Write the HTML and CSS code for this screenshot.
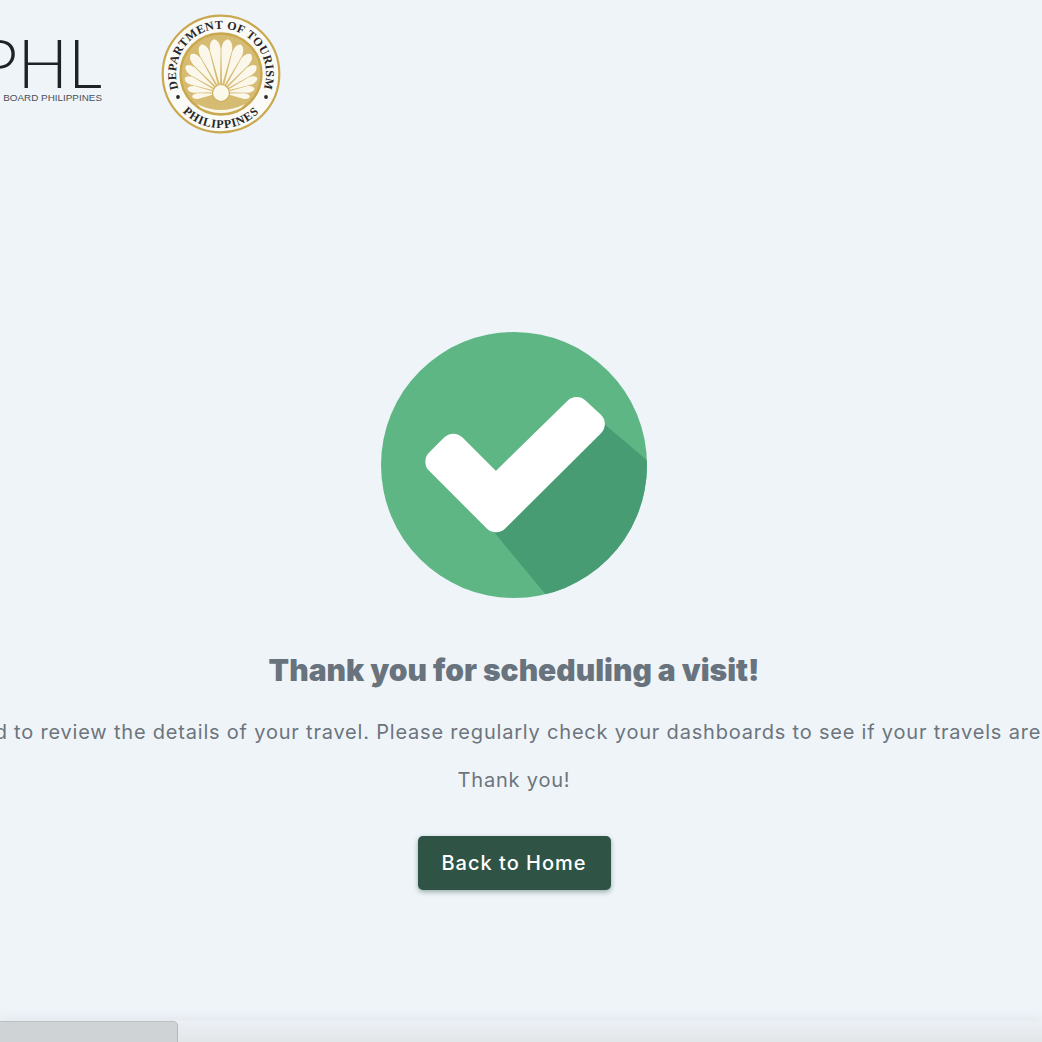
FILE: index.html
```html
<!DOCTYPE html>
<html lang="en">
<head>
<meta charset="utf-8">
<title>Thank you</title>
<link rel="stylesheet" href="styles.css">
</head>
<body>
<div class="page">
  <header class="logos">
    <div class="phl">
      <div class="phl-mark">PHL</div>
      <div class="phl-sub">BOARD PHILIPPINES</div>
    </div>
    <svg class="seal" viewBox="0 0 120 120" aria-label="Department of Tourism Philippines seal">
      <defs>
        <path id="arcTop" d="M 17 73 A 45 45 0 1 1 103 73"/>
        <path id="arcBottom" d="M 6.8 69.4 A 54 54 0 0 0 113.2 69.4"/>
        <path id="petal" d="M0 -8L-5.4 -44Q-5.4 -53 0 -54.5Q5.4 -53 5.4 -44Z"/>
      </defs>
      <circle cx="60" cy="60" r="58.3" fill="#fafaf6" stroke="#c9a84f" stroke-width="2.2"/>
      <circle cx="60" cy="60" r="40.5" fill="#d6bc72" stroke="#c9a84f" stroke-width="2.4"/>
      <g fill="#fbf7ea">
        <use href="#petal" transform="translate(60 79) rotate(7.5) scale(.995)"/>
        <use href="#petal" transform="translate(60 79) rotate(-7.5) scale(.995)"/>
        <use href="#petal" transform="translate(60 79) rotate(22.5) scale(.96)"/>
        <use href="#petal" transform="translate(60 79) rotate(-22.5) scale(.96)"/>
        <use href="#petal" transform="translate(60 79) rotate(37.5) scale(.9)"/>
        <use href="#petal" transform="translate(60 79) rotate(-37.5) scale(.9)"/>
        <use href="#petal" transform="translate(60 79) rotate(52.5) scale(.815)"/>
        <use href="#petal" transform="translate(60 79) rotate(-52.5) scale(.815)"/>
        <use href="#petal" transform="translate(60 79) rotate(67.5) scale(.72)"/>
        <use href="#petal" transform="translate(60 79) rotate(-67.5) scale(.72)"/>
        <use href="#petal" transform="translate(60 79) rotate(82.5) scale(.62)"/>
        <use href="#petal" transform="translate(60 79) rotate(-82.5) scale(.62)"/>
        <use href="#petal" transform="translate(60 79) rotate(97.5) scale(.535)"/>
        <use href="#petal" transform="translate(60 79) rotate(-97.5) scale(.535)"/>
      </g>
      <path d="M36 90Q60 102 84 90L80 94Q60 104 40 94Z" fill="#fbf7ea"/>
      <circle cx="60" cy="79" r="8.5" fill="#fbf8ec" stroke="#cdaf5c" stroke-width="1.2"/>
      <text class="seal-text"><textPath href="#arcTop" startOffset="50%" text-anchor="middle">DEPARTMENT OF TOURISM</textPath></text>
      <text class="seal-text seal-text-low"><textPath href="#arcBottom" startOffset="50%" text-anchor="middle">PHILIPPINES</textPath></text>
      <circle cx="17" cy="83" r="1.9" fill="#2b2b2b"/>
      <circle cx="105" cy="83" r="1.9" fill="#2b2b2b"/>
    </svg>
  </header>

  <main class="content">
    <svg class="check" viewBox="0 0 870 870" aria-label="Success">
      <defs><clipPath id="disc"><circle cx="432" cy="435" r="399"/></clipPath></defs>
      <circle cx="432" cy="435" r="399" fill="#5fb685"/>
      <polygon points="700,310 960,530 960,960 640,960 375,640" fill="#479c74" clip-path="url(#disc)"/>
      <polygon points="205,425 250,380 377.5,507.5 620,270 665.5,312 378,598" fill="#fff" stroke="#fff" stroke-width="78" stroke-linejoin="round"/>
    </svg>
    <h1 class="title">Thank you for scheduling a visit!</h1>
    <p class="lead">We will need to review the details of your travel. Please regularly check your dashboards to see if your travels are approved.</p>
    <p class="thanks">Thank you!</p>
    <a class="btn" href="#">Back to Home</a>
  </main>

  <footer class="bottom">
    <div class="tab"></div>
  </footer>
</div>
</body>
</html>
```
FILE: styles.css
```css
* { box-sizing: border-box; }
html, body { margin: 0; height: 100%; }
body { background: #eff4f9; overflow: hidden; font-family: "Inter", "Open Sans", sans-serif; }
.page { width: 1042px; height: 1042px; display: flex; flex-direction: column; overflow: hidden; }

.logos { display: flex; align-items: flex-start; height: 332px; padding-top: 14px; flex: none; }
.phl { width: 161px; margin-left: -59px; flex: none; display: flex; flex-direction: column; align-items: flex-end; }
.phl-mark { width: 161px; text-align: right; font-family: "Lato", sans-serif; font-weight: 300; font-size: 67px; line-height: 62px; margin-top: 17px; color: #1d2226; height: 62px; }
.phl-sub { font-family: "Liberation Sans", sans-serif; font-size: 9.9px; line-height: 10px; color: #4a4f55; white-space: nowrap; }
.seal { width: 120px; height: 120px; margin-left: 59px; flex: none; }
.seal-text { font-family: "Liberation Serif", serif; font-weight: 700; font-size: 12px; fill: #26282a; letter-spacing: 0.4px; }
.seal-text-low { letter-spacing: 0.8px; }

.content { flex: 1; width: 1028px; display: flex; flex-direction: column; align-items: center; }
.check { width: 290px; height: 290px; margin-top: -12px; flex: none; margin-left: 2px; }
.title { margin: 40px 0 0; font-size: 30px; line-height: 40px; font-weight: 900; color: #68737d; white-space: nowrap; text-align: center; letter-spacing: 0; }
.lead { margin: 26px 0 0; font-size: 20px; line-height: 32px; letter-spacing: 0.8px; color: #6c757d; white-space: nowrap; }
.thanks { margin: 16px 0 0; font-size: 20px; line-height: 32px; letter-spacing: 0.8px; color: #6c757d; }
.btn { margin-top: 40px; width: 193px; height: 54px; display: flex; align-items: center; justify-content: center; background: #2f5345; border-radius: 5px; color: #fff; font-size: 20px; letter-spacing: 1px; font-weight: 500; text-decoration: none; box-shadow: 0 2px 5px rgba(47,83,69,.45); }

.bottom { height: 21px; flex: none; background: linear-gradient(#eceff3, #e3e6e9); box-shadow: 0 -4px 8px rgba(200,205,210,.25); }
.tab { width: 178px; height: 21px; background: #d0d3d6; border-top: 1px solid #bcbfc3; border-right: 1px solid #b4b7bb; border-top-right-radius: 5px; }
```
